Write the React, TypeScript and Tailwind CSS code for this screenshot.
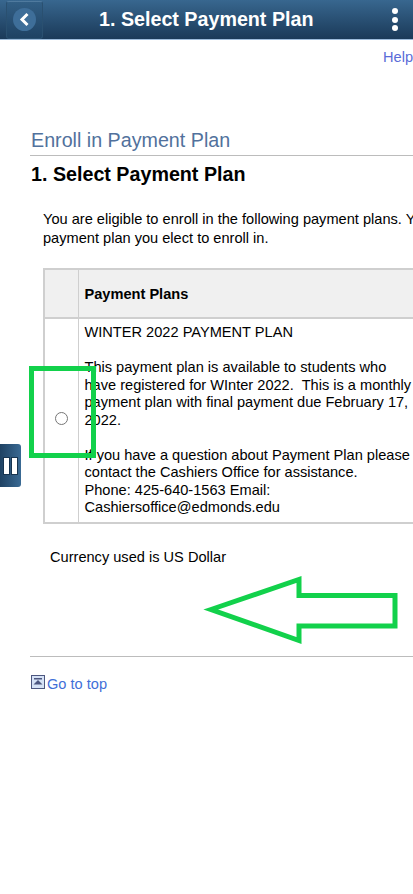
export default function App() {
  const body = `WINTER 2022 PAYMENT PLAN

This payment plan is available to students who
have registered for WInter 2022.  This is a monthly
payment plan with final payment due February 17,
2022.

If you have a question about Payment Plan please
contact the Cashiers Office for assistance.
Phone: 425-640-1563 Email:
Cashiersoffice@edmonds.edu`;
  return (
    <div className="relative h-[894px] w-[413px] overflow-hidden bg-white font-['Liberation_Sans',Arial,sans-serif] text-[14.6px] text-black">
      <header className="flex h-10 items-center border-b border-[#9dbcdc] bg-gradient-to-b from-[#38678f] to-[#1b3a59]">
        <div className="ml-[6px] flex h-[38px] w-[37px] shrink-0 items-center justify-center rounded-[3px] border border-[#2a5070] border-t-[#4f7a9e] bg-gradient-to-b from-[#325f85] to-[#1f4263]">
          <div className="flex h-[23px] w-[23px] items-center justify-center rounded-full bg-[#3e6e99]">
            <svg width="13" height="15" viewBox="0 0 13 15">
              <path d="M9.5 2 L4 7.5 L9.5 13" fill="none" stroke="#fff" strokeWidth="3" />
            </svg>
          </div>
        </div>
        <h1 className="ml-[56px] w-[293px] shrink-0 whitespace-nowrap text-[19.7px] font-bold text-[#fff]">1. Select Payment Plan</h1>
        <div className="flex flex-col gap-[2.5px]">
          <span className="h-[6px] w-[6px] rounded-full bg-white" />
          <span className="h-[6px] w-[6px] rounded-full bg-white" />
          <span className="h-[6px] w-[6px] rounded-full bg-white" />
        </div>
      </header>

      <div className="flex h-[35px] items-center justify-end">
        <a className="text-[#5a6cd8]">Help</a>
      </div>

      <div className="ml-[30px] mt-[54px]">
        <h2 className="pl-px text-[19.7px] leading-[23px] text-[#51719c]">Enroll in Payment Plan</h2>
        <div className="mt-[3px] h-px bg-[#bcbcbc]" />
        <h3 className="mt-[7px] pl-px text-[19.7px] font-bold leading-[23px]">1. Select Payment Plan</h3>
        <p className="ml-[13px] mt-[24px] whitespace-pre leading-[18.5px]">
          {"You are eligible to enroll in the following payment plans. You must select the\npayment plan you elect to enroll in."}
        </p>

        <table className="ml-[13px] mt-[21px] w-[500px] table-fixed border-collapse">
          <colgroup>
            <col className="w-[34px]" />
            <col />
          </colgroup>
          <thead>
            <tr className="h-[49px] bg-[#f0f0f0]">
              <th className="border-y-2 border-l-2 border-r border-[#cfcfcf]" />
              <th className="border-y-2 border-l border-[#cfcfcf] pl-[6px] pt-[2px] text-left font-bold">Payment Plans</th>
            </tr>
          </thead>
          <tbody>
            <tr>
              <td className="border-b-2 border-l-2 border-r border-[#cfcfcf] align-middle">
                <div className="mb-[4px] flex justify-center">
                  <span className="block h-[13px] w-[13px] rounded-full border border-[#767676] bg-white" />
                </div>
              </td>
              <td className="h-[205px] whitespace-pre border-b-2 border-l border-[#cfcfcf] pl-[6px] pt-[5px] align-top leading-[17.5px]">
                {body}
              </td>
            </tr>
          </tbody>
        </table>

        <p className="ml-[20px] mt-[25px] leading-[17px]">Currency used is US Dollar</p>
        <div className="mt-[90px] h-px bg-[#bcbcbc]" />
        <a className="ml-px mt-[17px] flex items-center text-[#3f6fd8]">
          <svg width="14" height="14" viewBox="0 0 14 14" className="mb-[5px] mr-[2px] shrink-0">
            <rect x="0.5" y="0.5" width="13" height="13" fill="#d6e2f6" stroke="#4d5780" />
            <rect x="3" y="3" width="8" height="1.5" fill="#4d5780" />
            <path d="M7 5 L11.5 9.5 L2.5 9.5 Z" fill="#4d5780" />
          </svg>
          Go to top
        </a>
      </div>

      <div className="absolute left-0 top-[444px] flex h-[43px] w-[21px] items-center justify-center gap-px rounded-r-[3px] bg-gradient-to-r from-[#1f4263] to-[#3a6a94]">
        <span className="h-[18px] w-[7px] border border-[#173450] bg-white" />
        <span className="h-[18px] w-[7px] border border-[#173450] bg-white" />
      </div>

      <div className="absolute left-[29px] top-[366px] h-[92px] w-[67px] border-[5px] border-[#12d14b]" />

      <svg className="absolute left-[200px] top-[570px]" width="205" height="80" viewBox="0 0 205 80">
        <path d="M11 39.5 L99 9.5 L99 25.5 L195 25.5 L195 56 L99 56 L99 70.5 Z" fill="none" stroke="#12d14b" strokeWidth="5" />
      </svg>
    </div>
  );
}
